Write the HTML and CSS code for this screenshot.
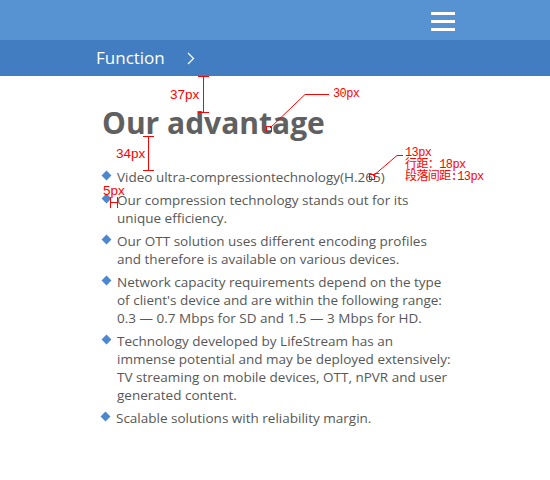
FILE: index.html
```html
<!DOCTYPE html>
<html lang="en">
<head>
<meta charset="utf-8">
<title>Our advantage</title>
<link rel="stylesheet" href="styles.css">
</head>
<body>
<div class="page">
  <header class="topbar">
    <div class="burger"><span></span><span></span><span></span></div>
  </header>
  <nav class="crumb">
    <span class="crumb-text">Function</span>
    <svg class="chev" width="8" height="13" viewBox="0 0 8 13"><polyline points="1,1 6.5,6.5 1,12" fill="none" stroke="#fff" stroke-width="1.3"/></svg>
  </nav>
  <main class="content">
    <h1 class="title">Our advantage</h1>
    <ul class="list">
      <li class="item first"><span class="dot"></span><span class="txt">Video ultra-compressiontechnology(H.265)</span></li>
      <li class="item"><span class="dot"></span><span class="txt">Our compression technology stands out for its<br>unique efficiency.</span></li>
      <li class="item"><span class="dot"></span><span class="txt">Our OTT solution uses different encoding profiles<br>and therefore is available on various devices.</span></li>
      <li class="item"><span class="dot"></span><span class="txt">Network capacity requirements depend on the type<br>of client's device and are within the following range:<br>0.3 — 0.7 Mbps for SD and 1.5 — 3 Mbps for HD.</span></li>
      <li class="item"><span class="dot"></span><span class="txt">Technology developed by LifeStream has an<br>immense potential and may be deployed extensively:<br>TV streaming on mobile devices, OTT, nPVR and user<br>generated content.</span></li>
      <li class="item last"><span class="dot"></span><span class="txt">Scalable solutions with reliability margin.</span></li>
    </ul>
  </main>

  <svg class="marks" width="550" height="480" viewBox="0 0 550 480">
    <g stroke="#f00" stroke-width="1" fill="none" shape-rendering="crispEdges">
      <line x1="203.5" y1="76" x2="203.5" y2="113"/>
      <line x1="198" y1="76.5" x2="209" y2="76.5"/>
      <line x1="198" y1="112.5" x2="209" y2="112.5"/>
      <line x1="148.5" y1="136" x2="148.5" y2="171"/>
      <line x1="143" y1="136.5" x2="154" y2="136.5"/>
      <line x1="143" y1="170.5" x2="154" y2="170.5"/>
      <line x1="305" y1="94.5" x2="329" y2="94.5"/>
      <rect x="266.5" y="126.5" width="5" height="5"/>
      <line x1="397" y1="155.5" x2="403" y2="155.5"/>
      <rect x="369.5" y="174.5" width="5" height="5"/>
      <line x1="110.5" y1="197" x2="110.5" y2="208"/>
      <line x1="117.5" y1="197" x2="117.5" y2="208"/>
      <line x1="110" y1="202.5" x2="118" y2="202.5"/>
    </g>
    <g stroke="#f00" stroke-width="1" fill="none">
      <line x1="305" y1="94.5" x2="270" y2="128"/>
      <line x1="397" y1="155.5" x2="373" y2="176"/>
    </g>
  </svg>
  <span class="note sans n37">37px</span>
  <span class="note sans n34">34px</span>
  <span class="note sans n5">5px</span>
  <span class="note mono n30">30px</span>
  <div class="note mono n13">13px<br>行距：18px<br>段落间距:13px</div>
</div>
</body>
</html>
```

FILE: styles.css
```css
html, body {
  margin: 0;
  padding: 0;
  background: #fff;
}
.page {
  position: relative;
  width: 550px;
  height: 480px;
  overflow: hidden;
  font-family: "Open Sans", "Noto Sans", sans-serif;
}
.topbar {
  height: 40px;
  background: #5792d2;
  display: flex;
  justify-content: flex-end;
  align-items: flex-start;
  padding-right: 95px;
  box-sizing: border-box;
}
.burger {
  display: flex;
  flex-direction: column;
  gap: 5.5px;
  margin-top: 12px;
}
.burger span {
  display: block;
  width: 24px;
  height: 2.5px;
  background: #fff;
}
.crumb {
  height: 36px;
  background: #417dc0;
  display: flex;
  align-items: center;
  padding-left: 96px;
  color: #fff;
}
.crumb-text {
  font-size: 17px;
  line-height: 20px;
}
.chev {
  margin-left: 22px;
  margin-top: 1px;
}
.content {
  padding-left: 100px;
}
.title {
  margin: 29px 0 0 2px;
  font-size: 30px;
  line-height: 36px;
  font-weight: 700;
  color: #606060;
}
.list {
  list-style: none;
  margin: 27px 0 0 0;
  padding: 0;
}
.item {
  display: flex;
  align-items: flex-start;
  font-size: 13.5px;
  line-height: 18px;
  color: #575757;
  margin-bottom: 5px;
}
.dot {
  flex: 0 0 17px;
  height: 18px;
  position: relative;
}
.dot::before {
  content: "";
  position: absolute;
  left: 3px;
  top: 4px;
  width: 7px;
  height: 7px;
  background: #4b88d0;
  transform: rotate(45deg);
}
.txt {
  white-space: nowrap;
}
.last .dot {
  flex-basis: 16px;
}
.last .dot::before {
  left: 2px;
}
.marks {
  position: absolute;
  left: 0;
  top: 0;
  pointer-events: none;
}
.note {
  position: absolute;
  color: #f00;
  white-space: nowrap;
}
.sans {
  font-family: "Liberation Sans", Arial, sans-serif;
  font-size: 13.5px;
  line-height: 14px;
}
.mono {
  font-family: "Liberation Mono", "Noto Sans CJK SC", monospace;
  font-size: 12px;
  line-height: 12px;
  letter-spacing: -0.6px;
}
.n37 { left: 170px; top: 88px; }
.n34 { left: 116px; top: 147px; }
.n5 { left: 103px; top: 184px; }
.n30 { left: 333px; top: 88px; }
.n13 { left: 405px; top: 147px; }
```
